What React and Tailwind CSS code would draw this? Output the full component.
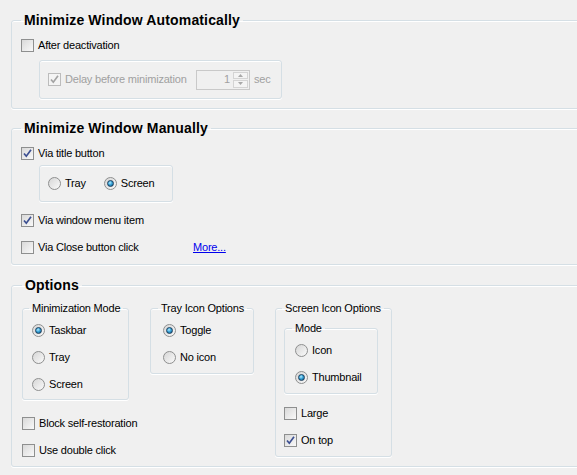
import React from "react";

const FONT = { fontFamily: '"Liberation Sans", Arial, sans-serif' };

function CheckBox({ checked = false, disabled = false }) {
  return (
    <span
      className={`relative flex h-[13px] w-[13px] shrink-0 items-center justify-center border ${
        disabled ? "border-[#bcbcbc] bg-[#f4f4f4]" : "border-[#8e8f8f] bg-gradient-to-br from-[#d9d9d9] to-[#f9f9f9]"
      }`}
    >
      {checked && (
        <svg width="11" height="11" viewBox="0 0 11 11" className="absolute">
          <path
            d="M2 5.5 L4.3 8.2 L9 1.8"
            fill="none"
            stroke={disabled ? "#a3a3a3" : "#3c4f91"}
            strokeWidth="1.7"
          />
        </svg>
      )}
    </span>
  );
}

function Radio({ checked = false }) {
  return (
    <span className="flex h-[13px] w-[13px] shrink-0 items-center justify-center rounded-full border border-[#8e8f8f] bg-gradient-to-br from-[#d6d6d6] to-[#fafafa]">
      {checked && (
        <span className="h-[7px] w-[7px] rounded-full border border-[#1b3e5c] bg-[radial-gradient(circle_at_40%_35%,#b8ecff_0%,#36a3d8_45%,#0e4f7e_100%)]" />
      )}
    </span>
  );
}

function Check({ label, checked, disabled, className = "" }) {
  return (
    <div className={`flex h-[13px] items-center gap-[4px] ${className}`}>
      <CheckBox checked={checked} disabled={disabled} />
      <span className={`whitespace-nowrap leading-[13px] ${disabled ? "text-[#a0a0a0]" : "text-black"}`}>{label}</span>
    </div>
  );
}

function Option({ label, checked, className = "" }) {
  return (
    <div className={`flex h-[13px] items-center gap-[4px] ${className}`}>
      <Radio checked={checked} />
      <span className="whitespace-nowrap leading-[13px]">{label}</span>
    </div>
  );
}

const box = "rounded-[3px] border border-[#d5dfe5] shadow-[inset_0_1px_0_#fff,0_1px_0_#fff]";

function Group({ title, className = "", children }) {
  return (
    <fieldset className={`${box} ${className}`}>
      <legend className="whitespace-nowrap px-[3px] text-[14px] font-bold leading-[16px] tracking-[0.15px]">{title}</legend>
      {children}
    </fieldset>
  );
}

function SubGroup({ title, className = "", legendClass = "", children }) {
  return (
    <fieldset className={`${box} min-w-0 ${className}`}>
      <legend className={`whitespace-nowrap px-[3px] leading-[14px] ${legendClass}`}>{title}</legend>
      {children}
    </fieldset>
  );
}

function Spinner() {
  return (
    <div className="flex h-[20px] w-[54px] items-center border border-[#c9c9c9] bg-[#f0f0f0]">
      <span className="flex-1 pr-[3px] text-right text-[#a0a0a0]">1</span>
      <div className="mr-[1px] flex h-[16px] w-[15px] flex-col gap-[1px]">
        <span className="flex flex-1 items-center justify-center border border-[#d4d4d4] bg-[#f4f4f4]">
          <svg width="5" height="3" viewBox="0 0 5 3"><path d="M0 3 L2.5 0 L5 3 Z" fill="#a8a8a8" /></svg>
        </span>
        <span className="flex flex-1 items-center justify-center border border-[#d4d4d4] bg-[#f4f4f4]">
          <svg width="5" height="3" viewBox="0 0 5 3"><path d="M0 0 L2.5 3 L5 0 Z" fill="#a8a8a8" /></svg>
        </span>
      </div>
    </div>
  );
}

export default function App() {
  return (
    <div
      style={FONT}
      className="h-[475px] w-[577px] overflow-hidden bg-[#f0f0f0] text-[11px] tracking-[-0.2px] text-black"
    >
      <div className="pt-[12px]">
        {/* Minimize Window Automatically */}
        <Group title="Minimize Window Automatically" className="ml-[11px] mr-[-30px] px-[9px] pb-[9px] pt-[11px]">
          <Check label="After deactivation" />
          <div className={`${box} ml-[18px] mt-[8px] flex h-[39px] w-[243px] items-center pl-[8px]`}>
            <Check label="Delay before minimization" checked disabled className="w-[148px]" />
            <Spinner />
            <span className="ml-[4px] text-[#a0a0a0]">sec</span>
          </div>
        </Group>

        {/* Minimize Window Manually */}
        <Group title="Minimize Window Manually" className="ml-[11px] mr-[-30px] mt-[11px] px-[9px] pb-[10px] pt-[11px]">
          <Check label="Via title button" checked />
          <div className={`${box} ml-[18px] mt-[5px] flex h-[37px] w-[134px] items-center pl-[8px]`}>
            <Option label="Tray" />
            <Option label="Screen" checked className="ml-[18px]" />
          </div>
          <Check label="Via window menu item" checked className="mt-[12px]" />
          <div className="mt-[14px] flex items-center">
            <Check label="Via Close button click" className="w-[172px]" />
            <a href="#" className="leading-[13px] text-[#0000ee] underline">More...</a>
          </div>
        </Group>

        {/* Options */}
        <Group title="Options" className="ml-[11px] mr-[-30px] mt-[12px] px-[10px] pb-[9px] pt-[8px]">
          <div className="flex items-start">
            <div className="flex w-[107px] shrink-0 flex-col">
              <SubGroup title="Minimization Mode" className="w-[107px] px-[6px] pb-[8px] pt-[9px]">
                <div className="flex flex-col gap-[14px] pl-[3px]">
                  <Option label="Taskbar" checked />
                  <Option label="Tray" />
                  <Option label="Screen" />
                </div>
              </SubGroup>
              <Check label="Block self-restoration" className="mt-[17px]" />
              <Check label="Use double click" className="mt-[14px]" />
            </div>

            <SubGroup title="Tray Icon Options" className="ml-[21px] w-[104px] shrink-0 px-[7px] pb-[9px] pt-[9px]">
              <div className="flex flex-col gap-[14px] pl-[5px]">
                <Option label="Toggle" checked />
                <Option label="No icon" />
              </div>
            </SubGroup>

            <SubGroup title="Screen Icon Options" className="ml-[21px] w-[117px] shrink-0 px-[8px] pb-[9px] pt-[6px]" legendClass="-ml-[2px]">
              <SubGroup title="Mode" className="w-[94px] px-[7px] pb-[9px] pt-[9px]">
                <div className="flex flex-col gap-[14px] pl-[3px]">
                  <Option label="Icon" />
                  <Option label="Thumbnail" checked />
                </div>
              </SubGroup>
              <Check label="Large" className="mt-[13px]" />
              <Check label="On top" checked className="mt-[14px]" />
            </SubGroup>
          </div>
        </Group>
      </div>
    </div>
  );
}
